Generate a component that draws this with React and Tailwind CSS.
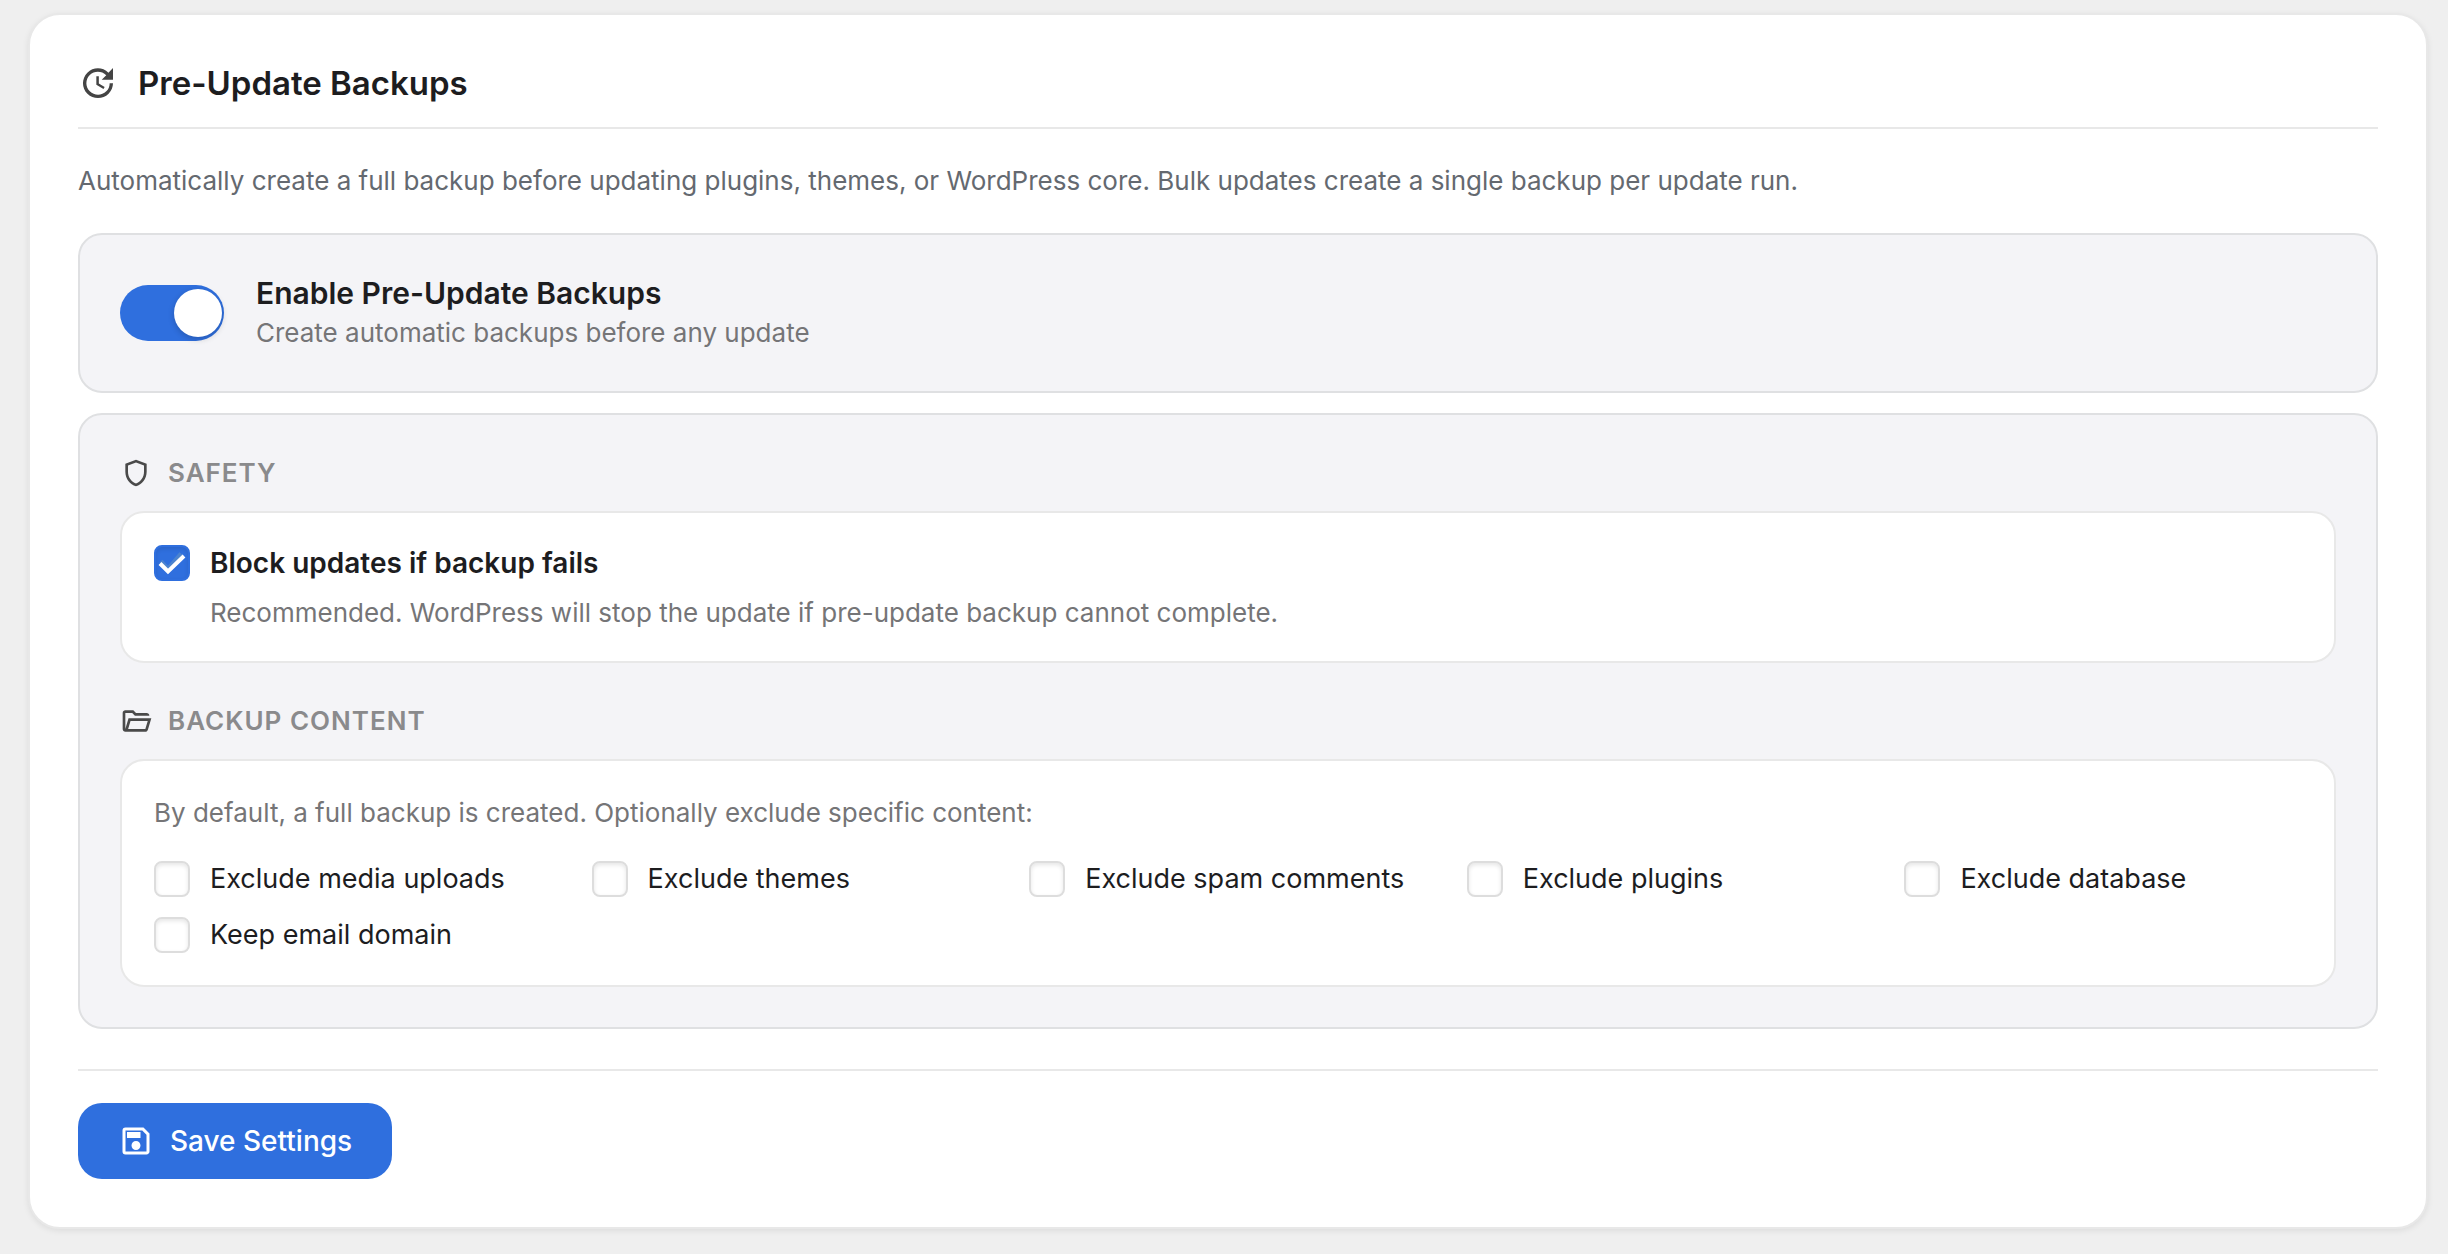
import React, { useState } from "react";
import { MdUpdate, MdOutlineSave, MdOutlineShield } from "react-icons/md";

const exclusions = [
  "Exclude media uploads",
  "Exclude themes",
  "Exclude spam comments",
  "Exclude plugins",
  "Exclude database",
  "Keep email domain",
];

function FolderIcon() {
  return (
    <svg viewBox="0 0 24 24" className="size-8 text-[#4a4a4a]" fill="currentColor" aria-hidden="true">
      <path d="M4 20q-.825 0-1.412-.587T2 18V6q0-.825.588-1.412T4 4h6l2 2h8q.825 0 1.413.588T22 8H11.175l-2-2H4v12l2.400-8h17.100l-2.575 8.575q-.2.650-.737 1.038T19 20zm2.100-2H19l1.800-6H7.900z" />
    </svg>
  );
}

function CheckBox({ id, defaultChecked }) {
  return (
    <span className="relative inline-flex size-9 shrink-0">
      <input
        id={id}
        type="checkbox"
        defaultChecked={defaultChecked}
        className="peer size-9 appearance-none rounded-lg border-2 border-[#dddddd] bg-white shadow-[inset_0_2px_4px_rgba(0,0,0,0.1)] checked:border-[#2f6fde] checked:bg-[#2f6fde]"
      />
      <svg viewBox="0 0 36 36" className="pointer-events-none absolute inset-0 hidden size-9 peer-checked:block" fill="none" strokeWidth="4" aria-hidden="true">
        <path d="M7 16 14 23.500 27 8.500" stroke="#4b83cf" />
        <path d="M6 18.500 14 26.500 30 11" stroke="#ffffff" />
      </svg>
    </span>
  );
}

function SectionTitle({ icon, children }) {
  return (
    <h3 className="flex items-center gap-4 text-[26px] leading-9 font-semibold tracking-[1px] text-[#8a8a8c] uppercase">
      {icon}
      {children}
    </h3>
  );
}

export default function App() {
  const [enabled, setEnabled] = useState(true);
  return (
    <div className="min-h-screen bg-[#efefef] px-7 pt-[13px] pr-5 pb-6 font-['Inter',sans-serif] text-[#1d1d1f]">
      <main className="rounded-[32px] border-2 border-[#e8e8e8] bg-white p-12 shadow-[0_2px_6px_rgba(0,0,0,0.08)]">
        <header className="flex items-center gap-5 border-b-2 border-[#e8e8e8] pb-6">
          <MdUpdate className="size-10 text-[#444444]" aria-hidden="true" />
          <h2 className="text-[33px] leading-10 font-semibold">Pre-Update Backups</h2>
        </header>

        <p className="mt-8 text-[26px] leading-10 text-[#646970]">
          Automatically create a full backup before updating plugins, themes, or WordPress core. Bulk updates create a single backup per update run.
        </p>

        <section className="mt-8 flex items-center gap-8 rounded-3xl border-2 border-[#dfe0e2] bg-[#f4f4f7] px-10 py-9">
          <button
            type="button"
            role="switch"
            aria-checked={enabled}
            aria-labelledby="enable-label"
            onClick={() => setEnabled(!enabled)}
            className="flex h-14 w-[104px] shrink-0 items-center rounded-full bg-[#b8bcc4] p-1 aria-checked:justify-end aria-checked:bg-[#2f6fde] aria-checked:pr-0.5"
          >
            <span className="size-12 rounded-full bg-white shadow-[0_2px_6px_rgba(0,0,0,0.2)]" />
          </button>
          <div className="pb-1">
            <div id="enable-label" className="text-[30px] leading-11 font-semibold">Enable Pre-Update Backups</div>
            <div className="text-[26px] leading-9 text-[#757577]">Create automatic backups before any update</div>
          </div>
        </section>

        <section className="mt-5 rounded-3xl border-2 border-[#dfe0e2] bg-[#f4f4f7] p-10">
          <SectionTitle icon={<MdOutlineShield className="size-8 text-[#4a4a4a]" aria-hidden="true" />}>Safety</SectionTitle>
          <div className="mt-5 rounded-3xl border-2 border-[#e8e8e8] bg-white p-8">
            <div className="flex items-center gap-5">
              <CheckBox id="block" defaultChecked />
              <label htmlFor="block" className="text-[28px] leading-9 font-semibold">Block updates if backup fails</label>
            </div>
            <p className="mt-4 pl-14 text-[26px] leading-8 text-[#757577]">
              Recommended. WordPress will stop the update if pre-update backup cannot complete.
            </p>
          </div>

          <div className="mt-10">
            <SectionTitle icon={<FolderIcon />}>Backup Content</SectionTitle>
          </div>
          <div className="mt-5 rounded-3xl border-2 border-[#e8e8e8] bg-white p-8">
            <p className="text-[26px] leading-10 text-[#757577]">By default, a full backup is created. Optionally exclude specific content:</p>
            <div className="mt-7 grid grid-cols-5 gap-x-10 gap-y-5">
              {exclusions.map((name, i) => (
                <div key={name} className="flex items-center gap-5">
                  <CheckBox id={`option-${i}`} />
                  <label htmlFor={`option-${i}`} className="text-[27px] leading-9">{name}</label>
                </div>
              ))}
            </div>
          </div>
        </section>

        <footer className="mt-10 border-t-2 border-[#e8e8e8] pt-8">
          <button type="button" className="flex h-[76px] items-center gap-4 rounded-3xl bg-[#2f6fde] px-10 text-[28px] leading-9 font-medium text-white">
            <MdOutlineSave className="size-9" aria-hidden="true" />
            Save Settings
          </button>
        </footer>
      </main>
    </div>
  );
}
